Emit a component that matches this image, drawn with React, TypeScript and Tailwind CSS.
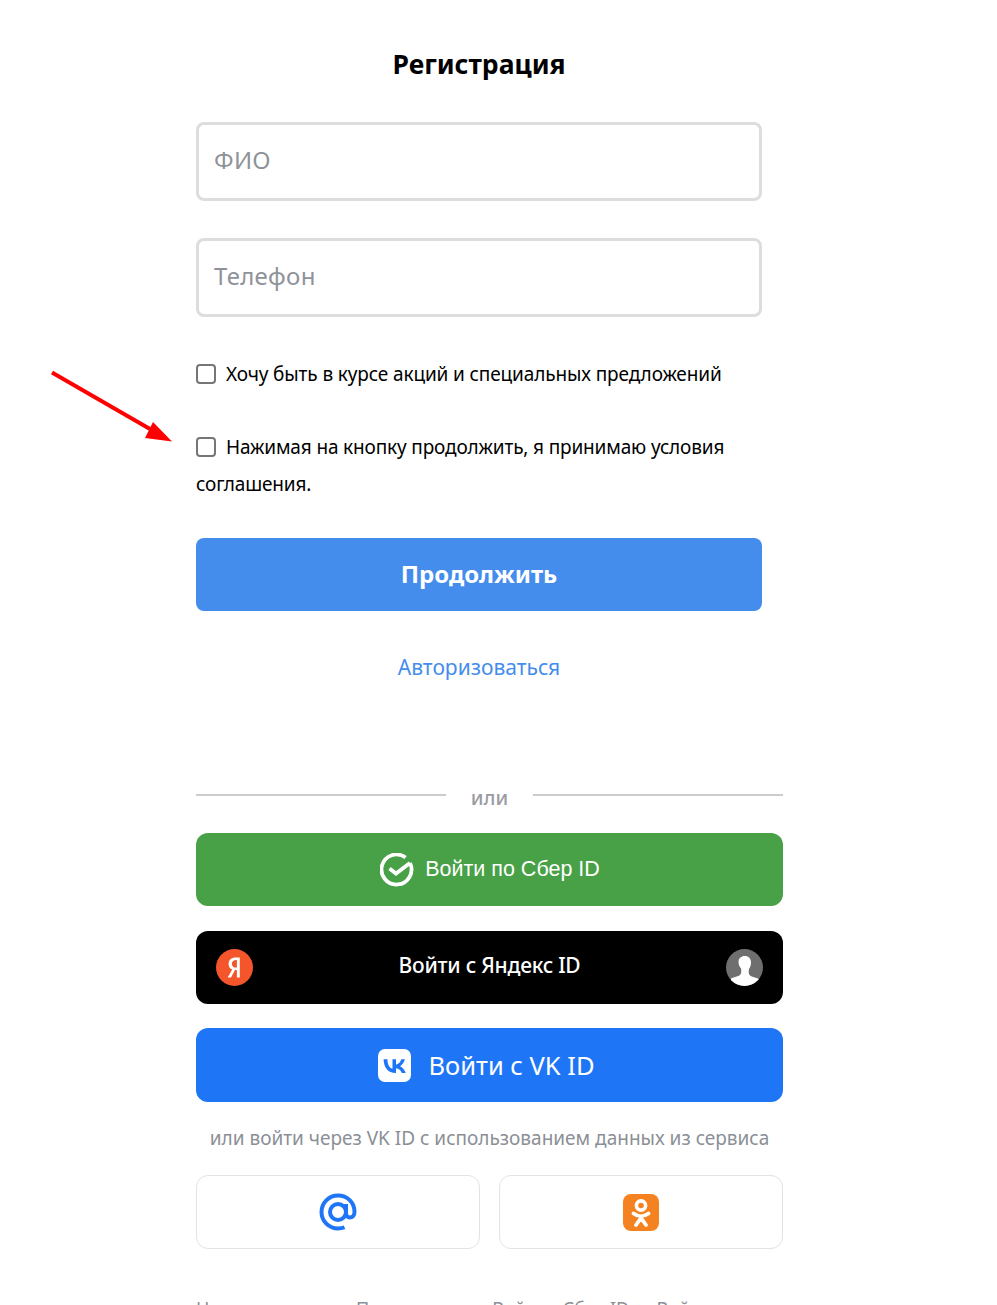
import React from 'react';

const SberIcon = () => (
  <svg width="34" height="34" viewBox="0 0 34 34" fill="none">
    <path d="M30 10A15 15 0 1 1 25.600 4.600" stroke="#fff" strokeWidth="3.800" />
    <path d="M9.500 15.500l6.500 5L30 10" stroke="#fff" strokeWidth="3.800" />
  </svg>
);

const YandexIcon = () => (
  <svg width="37" height="37" viewBox="0 0 37 37">
    <circle cx="18.500" cy="18.500" r="18.500" fill="#f4552a" />
    <path d="M20.800 8.500h3v20h-2.900v-7.400h-1.900l-4 7.400h-3.300l4.500-8c-2.300-1-3.600-3-3.600-5.600 0-4 2.700-6.400 7.100-6.400h1.100zm.1 2.600c-3-.2-5 1-5 3.800 0 2.600 2 3.900 5 3.700z" fill="#fff" />
  </svg>
);

const AvatarIcon = () => (
  <svg width="37" height="37" viewBox="0 0 37 37">
    <clipPath id="avatar-clip">
      <circle cx="18.500" cy="18.500" r="18.500" />
    </clipPath>
    <g clipPath="url(#avatar-clip)">
      <rect width="37" height="37" fill="#6f6f6f" />
      <path d="M18.800 7c3.900 0 6.200 2.500 6.200 6.500 0 2.700-.9 5-2 6.500-.6 2.500-.4 5 1 6.500 1.800 1.500 6 1.800 9 3.500V37H5v-7.500c3-1.700 7.200-2 9-3.500 1.400-1.500 1.600-4 1-6.500-1.300-1.400-2.500-3.500-2.500-6.500C12.500 9.500 15 7 18.800 7z" fill="#fff" />
    </g>
  </svg>
);

const VkIcon = () => (
  <svg width="33" height="33" viewBox="0 0 33 33">
    <rect width="33" height="33" rx="7" fill="#fff" />
    <path d="M17.600 24C10.100 24 5.800 18.900 5.600 10.300h3.800c.1 6.300 2.900 9 5.100 9.500v-9.500H18v5.400c2.200-.2 4.500-2.700 5.300-5.400h3.600c-.6 3.400-3.100 5.900-4.900 6.900 1.800.8 4.600 3 5.700 6.800h-3.900c-.8-2.500-2.900-4.500-5.800-4.800V24z" fill="#1e76f7" />
  </svg>
);

const MailIcon = () => (
  <svg width="38" height="38" viewBox="0 0 38 38" fill="none">
    <circle cx="19" cy="19" r="8" stroke="#1e76f7" strokeWidth="4" />
    <path d="M27 11v9c0 2.800 1.600 4.500 3.800 4.500 2.600 0 4.700-2 4.700-5.500C35.500 9.500 28.300 2.500 19 2.500 9.800 2.500 2.500 10 2.500 19S9.800 35.500 19 35.500c2.500 0 4.500-.4 6.500-1.300" stroke="#1e76f7" strokeWidth="4" />
  </svg>
);

const OkIcon = () => (
  <svg width="36" height="37" viewBox="0 0 36 37" fill="none">
    <rect width="36" height="37" rx="8" fill="#f58220" />
    <circle cx="18" cy="11.500" r="4.600" stroke="#fff" strokeWidth="3.600" />
    <path d="M10.500 19.500c4.500 3.400 10.500 3.400 15 0" stroke="#fff" strokeWidth="3.800" strokeLinecap="round" />
    <path d="M18 23v1.500M18 24l-5 7M18 24l5 7" stroke="#fff" strokeWidth="3.800" strokeLinecap="round" />
  </svg>
);

const Arrow = () => (
  <svg className="absolute left-[50px] top-[370px]" width="125" height="75" viewBox="0 0 125 75">
    <path d="M2 2.500L100 59" stroke="#f00" strokeWidth="4" />
    <path d="M122 71.500L95 68l8-16z" fill="#f00" />
  </svg>
);

const Field = ({ placeholder }: { placeholder: string }) => (
  <input
    placeholder={placeholder}
    className="block w-full h-[79px] border-[3px] border-[#dddddd] rounded-lg pl-[15px] pr-[15px] pb-1 text-[24px] tracking-[0.3px] outline-none placeholder:text-[#8f9399] placeholder:opacity-100"
  />
);

const CheckBox = () => (
  <input
    type="checkbox"
    className="appearance-none w-5 h-5 shrink-0 border-2 border-[#767676] rounded align-[-3px] mr-2.5"
  />
);

export default function App() {
  return (
    <div className="relative h-[1305px] overflow-hidden bg-white font-['Noto_Sans',sans-serif] text-black">
      <Arrow />
      <div className="ml-[196px] w-[587px]">
        <div className="w-[566px]">
          <h1 className="pt-[46px] text-center text-[26.500px] leading-[36px] font-bold">Регистрация</h1>
          <div className="mt-[40px] flex flex-col gap-[37px]">
            <Field placeholder="ФИО" />
            <Field placeholder="Телефон" />
          </div>
          <label className="mt-[39px] block text-[19px] leading-[37px] tracking-[-0.12px]">
            <CheckBox />
            Хочу быть в курсе акций и специальных предложений
          </label>
          <label className="mt-9 block text-[19px] leading-[37px] tracking-[-0.15px]">
            <CheckBox />
            Нажимая на кнопку продолжить, я принимаю условия соглашения.
          </label>
          <button className="mt-[35px] block w-full h-[73px] pb-[2px] rounded-lg bg-[#448ded] text-white text-[24px] font-bold">
            Продолжить
          </button>
          <a className="mt-[42px] block text-center text-[#448ded] text-[21px] leading-[28px]">
            Авторизоваться
          </a>
        </div>

        <div className="mt-[113px] flex items-start">
          <div className="w-[250px] h-0.5 bg-[#cccccc]" />
          <span className="w-[87px] -mt-[9px] text-center text-[20px] leading-[25px] font-medium text-[#9a9ba1]">или</span>
          <div className="flex-1 h-0.5 bg-[#cccccc]" />
        </div>

        <div className="mt-[23px] flex flex-col">
          <button className="h-[73px] rounded-xl bg-[#48a047] flex items-center justify-center gap-[11px] pl-px text-white">
            <SberIcon />
            <span className="font-[Liberation_Sans,Arial,sans-serif] text-[21.500px]">Войти по Сбер ID</span>
          </button>
          <button className="mt-[25px] relative h-[73px] rounded-xl bg-black flex items-center justify-center text-white text-[21px] font-medium tracking-[-0.25px]">
            <span className="absolute left-5 top-[18px]"><YandexIcon /></span>
            <span className="-mt-[4px]">Войти с Яндекс ID</span>
            <span className="absolute right-5 top-[18px]"><AvatarIcon /></span>
          </button>
          <button className="mt-6 h-[74px] rounded-xl bg-[#1e76f7] flex items-center justify-center gap-[17px] pr-[6px] text-white text-[25.500px]">
            <VkIcon />
            Войти с VK ID
          </button>
        </div>

        <p className="mt-[22px] text-center text-[19px] leading-[28px] text-[#8b8f96]">
          или войти через VK ID с использованием данных из сервиса
        </p>

        <div className="mt-[23px] grid grid-cols-2 gap-[19px]">
          <div className="h-[74px] rounded-xl border border-[#e3e3e3] flex items-center justify-center">
            <MailIcon />
          </div>
          <div className="h-[74px] rounded-xl border border-[#e3e3e3] flex items-center justify-center">
            <OkIcon />
          </div>
        </div>

        <p className="mt-[46px] text-[18px] leading-[26px] text-[#8b8f96] whitespace-nowrap tracking-[-0.1px]">
          Нажимая кнопку «Продолжить», «Войти с Сбер ID», «Войти
        </p>
      </div>
    </div>
  );
}
